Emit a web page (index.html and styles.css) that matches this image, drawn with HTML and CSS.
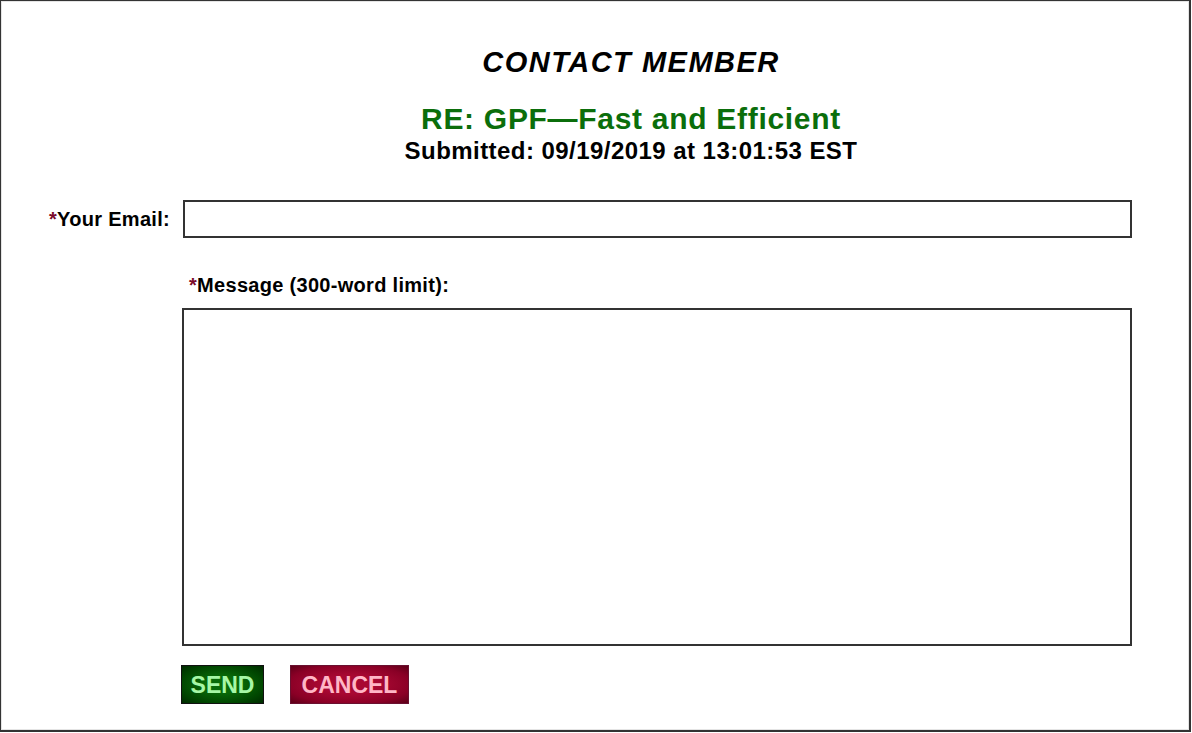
FILE: index.html
```html
<!DOCTYPE html>
<html lang="en">
<head>
  <meta charset="UTF-8">
  <title>Contact Member</title>
  <meta name="viewport" content="width=device-width, initial-scale=1.0">
  <link rel="stylesheet" href="styles.css">
</head>
<body>
  <div class="page">
    <div class="entete">
      <h1>CONTACT MEMBER</h1>
      <h2>RE: GPF&mdash;Fast and Efficient</h2>
      <p class="date">Submitted: 09/19/2019 at 13:01:53 EST</p>
    </div>

    <div class="formulaire">
      <label class="lib" for="email"><span class="req">*</span>Your Email:</label>
      <input type="text" id="email">

      <div></div>
      <label class="lib-msg" for="message"><span class="req">*</span>Message (300-word limit):</label>

      <div></div>
      <textarea id="message"></textarea>

      <div></div>
      <div class="boutons">
        <button class="envoyer">SEND</button>
        <button class="annuler">CANCEL</button>
      </div>
    </div>
  </div>
</body>
</html>
```

FILE: styles.css
```css
body {
  margin: 0;
  padding: 0;
  font-family: "Liberation Sans", Arial, sans-serif;
  background: #fff;
  color: #000;
}
.page {
  width: 1191px;
  height: 732px;
  box-sizing: border-box;
  border: 1px solid #333;
  border-right-width: 2px;
  border-bottom-width: 2px;
  box-shadow: inset 0 0 0 1px #e4e4e4;
}
.entete {
  padding-left: 72px;
  text-align: center;
}
h1 {
  margin: 44px 0 0;
  font-size: 29px;
  line-height: 34px;
  font-style: italic;
  font-weight: bold;
  letter-spacing: 1.5px;
}
h2 {
  margin: 23px 0 0;
  font-size: 30px;
  line-height: 34px;
  color: #0b6e0b;
  letter-spacing: 0.7px;
}
.date {
  margin: 1px 0 0;
  font-size: 24px;
  line-height: 28px;
  font-weight: bold;
  letter-spacing: 0.45px;
}
.formulaire {
  display: grid;
  grid-template-columns: 169px 949px;
  column-gap: 13px;
  align-items: center;
  margin-top: 35px;
}
.lib {
  text-align: right;
  font-size: 20px;
  font-weight: bold;
  letter-spacing: 0.3px;
}
.req {
  color: #7a0a2a;
}
input {
  height: 38px;
  box-sizing: border-box;
  border: 2px solid #333;
  margin: 0;
  padding: 4px;
  font-size: 18px;
}
.lib-msg {
  margin: 35px 0 11px 6px;
  font-size: 20px;
  line-height: 24px;
  font-weight: bold;
  letter-spacing: 0.3px;
}
textarea {
  height: 338px;
  width: 950px;
  margin-left: -1px;
  box-sizing: border-box;
  border: 2px solid #333;
  resize: none;
  padding: 4px;
}
.boutons {
  display: flex;
  gap: 26px;
  margin: 19px 0 0 -2px;
}
.boutons button {
  height: 39px;
  font-family: "Liberation Sans", Arial, sans-serif;
  font-size: 23px;
  font-weight: bold;
  padding: 1px 0 0;
  cursor: pointer;
}
.envoyer {
  width: 83px;
  color: #a6f7a6;
  background: radial-gradient(ellipse at center, #086a08 30%, #004400 75%, #002a00 100%);
  border: 1px solid #111;
}
.annuler {
  width: 119px;
  color: #ffb6c6;
  font-weight: normal;
  background: radial-gradient(ellipse at center, #a80832 35%, #8a0026 75%, #5c0018 100%);
  border: 1px solid #6a1030;
}
```
